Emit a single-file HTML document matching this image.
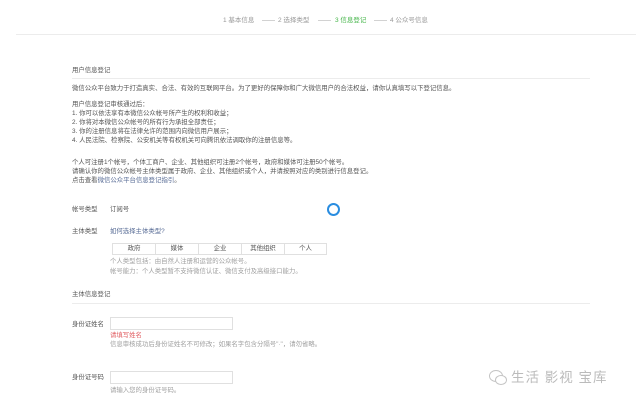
<!DOCTYPE html>
<html><head><meta charset="utf-8"><style>
body{margin:0;width:640px;height:405px;background:#fff;position:relative;overflow:hidden;font-family:"Liberation Sans","Noto Sans CJK SC",sans-serif;color:#555;font-size:6.4px}
.a{position:absolute;white-space:nowrap;line-height:8px}
.g{color:#a0a0a0}
.hr{position:absolute;height:1px;background:#ececec}
.btn{position:absolute;top:243px;height:12px;border:1px solid #e0e0e0;box-sizing:border-box;text-align:center;line-height:10px;color:#555;background:#fff}
.inp{position:absolute;left:110px;width:123px;height:13px;border:1px solid #e0e0e0;box-sizing:border-box}
.s{position:absolute;top:17px;font-size:6.5px;color:#999;white-space:nowrap;line-height:8px}
</style></head><body>
<div class="s" style="left:223px">1 基本信息</div>
<div class="s" style="left:262px">——</div>
<div class="s" style="left:278px">2 选择类型</div>
<div class="s" style="left:318px">——</div>
<div class="s" style="left:335px;color:#44b549">3 信息登记</div>
<div class="s" style="left:374px">——</div>
<div class="s" style="left:390px">4 公众号信息</div>
<div class="hr" style="left:16px;top:34px;width:620px"></div>
<div class="a" style="left:72px;top:67px">用户信息登记</div>
<div class="hr" style="left:72px;top:78px;width:518px"></div>
<div class="a" style="left:72px;top:85px">微信公众平台致力于打造真实、合法、有效的互联网平台。为了更好的保障你和广大微信用户的合法权益，请你认真填写以下登记信息。</div>
<div class="a" style="left:72px;top:100px;line-height:9px">用户信息登记审核通过后：<br>1. 你可以依法享有本微信公众帐号所产生的权利和收益；<br>2. 你将对本微信公众帐号的所有行为承担全部责任；<br>3. 你的注册信息将在法律允许的范围内向微信用户展示；<br>4. 人民法院、检察院、公安机关等有权机关可向腾讯依法调取你的注册信息等。</div>
<div class="a" style="left:72px;top:158px;line-height:9px">个人可注册1个帐号，个体工商户、企业、其他组织可注册2个帐号，政府和媒体可注册50个帐号。<br>请确认你的微信公众帐号主体类型属于政府、企业、其他组织或个人，并请按照对应的类别进行信息登记。<br>点击查看<span style="color:#576b95">微信公众平台信息登记指引</span>。</div>
<div class="a" style="left:72px;top:206px">帐号类型</div>
<div class="a" style="left:110px;top:206px">订阅号</div>
<div style="position:absolute;left:327px;top:203px;width:9px;height:9px;border:2.5px solid #2a8de0;border-radius:50%"></div>
<div class="a" style="left:72px;top:228px">主体类型</div>
<div class="a" style="left:110px;top:228px;color:#576b95">如何选择主体类型?</div>
<div class="btn" style="left:112px;width:44px">政府</div>
<div class="btn" style="left:155px;width:44px">媒体</div>
<div class="btn" style="left:198px;width:44px">企业</div>
<div class="btn" style="left:241px;width:44px">其他组织</div>
<div class="btn" style="left:284px;width:43px">个人</div>
<div class="a g" style="left:110px;top:257px;line-height:10px">个人类型包括：由自然人注册和运营的公众帐号。<br>帐号能力：个人类型暂不支持微信认证、微信支付及高级接口能力。</div>
<div class="a" style="left:72px;top:291px">主体信息登记</div>
<div class="hr" style="left:72px;top:303px;width:518px"></div>
<div class="a" style="left:72px;top:321px">身份证姓名</div>
<div class="inp" style="top:317px"></div>
<div class="a" style="left:110px;top:332px;color:#e15f63">请填写姓名</div>
<div class="a g" style="left:110px;top:341px">信息审核成功后身份证姓名不可修改；如果名字包含分隔号"·"，请勿省略。</div>
<div class="a" style="left:72px;top:374px">身份证号码</div>
<div class="inp" style="top:371px"></div>
<div class="a g" style="left:110px;top:387px">请输入您的身份证号码。</div>
<svg style="position:absolute;left:488px;top:369px" width="20" height="18" viewBox="0 0 20 18" fill="none" stroke="#c4c4c4" stroke-width="1"><ellipse cx="8" cy="7" rx="6.5" ry="5.5"/><ellipse cx="13" cy="11" rx="5.5" ry="4.5" fill="#fff"/></svg>
<div class="a" style="left:511px;top:370px;font-size:13.5px;line-height:16px;color:#bbb;letter-spacing:1px">生活 影视 宝库</div>
</body></html>
